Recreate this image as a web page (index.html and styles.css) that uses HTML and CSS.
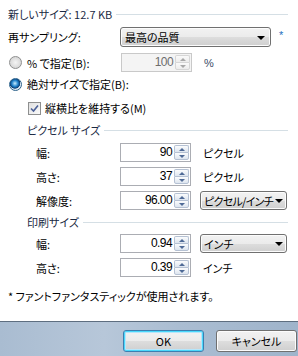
FILE: index.html
```html
<!DOCTYPE html>
<html lang="ja">
<head>
<meta charset="utf-8">
<link rel="stylesheet" href="styles.css">
</head>
<body>
<div class="dialog">
  <div class="content">
    <div class="group-head r-head1"><span class="gtext">新しいサイズ: 12.7 KB</span><span class="rule"></span></div>
    <div class="row r-resample">
      <span class="label l0">再サンプリング:</span>
      <div class="combo wide"><span class="ctext">最高の品質</span><span class="arrow"></span></div>
      <span class="star">*</span>
    </div>
    <div class="row r-percent">
      <span class="radio"></span>
      <span class="label l1">% で指定(B):</span>
      <div class="spin disabled"><span class="val">100</span><span class="btns"><span class="up"></span><span class="down"></span></span></div>
      <span class="unit pct">%</span>
    </div>
    <div class="row r-abs">
      <span class="radio checked"></span>
      <span class="label">絶対サイズで指定(B):</span>
    </div>
    <div class="row r-check">
      <span class="check"><svg width="9" height="9" viewBox="0 0 9 9"><path d="M1 4.5 L3.5 7 L8 1.5" fill="none" stroke="#4a5f97" stroke-width="1.6"/></svg></span>
      <span class="label">縦横比を維持する(M)</span>
    </div>
    <div class="group-head r-head2"><span class="gtext">ピクセル サイズ</span><span class="rule"></span></div>
    <div class="row r-field">
      <span class="label l2">幅:</span>
      <div class="spin"><span class="val">90</span><span class="btns"><span class="up"></span><span class="down"></span></span></div>
      <span class="unit">ピクセル</span>
    </div>
    <div class="row r-field">
      <span class="label l2">高さ:</span>
      <div class="spin"><span class="val">37</span><span class="btns"><span class="up"></span><span class="down"></span></span></div>
      <span class="unit">ピクセル</span>
    </div>
    <div class="row r-field">
      <span class="label l2">解像度:</span>
      <div class="spin"><span class="val">96.00</span><span class="btns"><span class="up"></span><span class="down"></span></span></div>
      <div class="combo small"><span class="ctext tight">ピクセル/インチ</span><span class="arrow"></span></div>
    </div>
    <div class="group-head r-head3"><span class="gtext">印刷サイズ</span><span class="rule"></span></div>
    <div class="row r-field first2">
      <span class="label l2">幅:</span>
      <div class="spin"><span class="val">0.94</span><span class="btns"><span class="up"></span><span class="down"></span></span></div>
      <div class="combo small"><span class="ctext">インチ</span><span class="arrow"></span></div>
    </div>
    <div class="row r-field">
      <span class="label l2">高さ:</span>
      <div class="spin"><span class="val">0.39</span><span class="btns"><span class="up"></span><span class="down"></span></span></div>
      <span class="unit">インチ</span>
    </div>
    <div class="note">* ファントファンタスティックが使用されます。</div>
  </div>
  <div class="footer">
    <button class="btn default">OK</button>
    <button class="btn">キャンセル</button>
  </div>
</div>
</body>
</html>
```
FILE: styles.css
```css
html, body {
  margin: 0;
  padding: 0;
  background: #fff;
}
body {
  font-family: "Noto Sans CJK JP", "Liberation Sans", sans-serif;
  font-size: 11px;
  font-feature-settings: "palt" 1;
  color: #000;
}
.dialog {
  width: 298px;
  height: 356px;
  display: flex;
  flex-direction: column;
  overflow: hidden;
}
.content {
  padding-left: 8px;
  display: flex;
  flex-direction: column;
}
.row {
  display: flex;
  align-items: center;
  height: 19px;
}
.group-head {
  display: flex;
  align-items: center;
  height: 16px;
  color: #1b2a44;
}
.gtext { white-space: nowrap; }
.rule {
  flex: 1;
  height: 1px;
  background: #d5dfe5;
  margin-left: 4px;
  margin-right: 10px;
}
.r-head1 { margin-top: 6px; }
.r-resample { margin-top: 5px; height: 20px; }
.r-percent { margin-top: 6px; }
.r-abs { margin-top: 3px; height: 18px; }
.r-check { margin-top: 6px; height: 18px; padding-left: 20px; }
.r-head2 { margin-top: 5px; padding-left: 19px; }
.r-field { margin-top: 5px; }
.r-head3 { margin-top: 4px; padding-left: 19px; }
.r-field.first2 { margin-top: 4px; }
.label { white-space: nowrap; box-sizing: border-box; }
.l0 { flex: 0 0 112px; }
.l1 { flex: 0 0 94px; }
.l2 { flex: 0 0 112px; padding-left: 28px; }
.radio {
  flex: 0 0 auto;
  width: 11px;
  height: 11px;
  border-radius: 50%;
  border: 1px solid #8e8f8f;
  background: radial-gradient(circle at 50% 50%, #f4f4f4 0, #d8d8d8 70%, #c8c8c8 100%);
  margin-left: 1px;
  margin-right: 5px;
}
.radio.checked {
  border-color: #2c628b;
  background: radial-gradient(circle at 45% 40%, #c9ecff 0, #1d7fc9 35%, #0d3d73 55%, #dfe9f3 62%, #e6eef7 100%);
}
.check {
  flex: 0 0 auto;
  width: 11px;
  height: 11px;
  border: 1px solid #8e8f8f;
  background: linear-gradient(135deg, #e0e0e0, #fafafa);
  display: flex;
  align-items: center;
  justify-content: center;
  margin-right: 4px;
}
.check svg { display: block; }
.combo {
  flex: 0 0 auto;
  display: flex;
  align-items: center;
  box-sizing: border-box;
  border: 1px solid #707070;
  border-radius: 3px;
  background: linear-gradient(to bottom, #f2f2f2 0, #ebebeb 50%, #dddddd 51%, #cfcfcf 100%);
  box-shadow: inset 0 0 0 1px #fcfcfc;
  padding-left: 4px;
  padding-right: 5px;
}
.combo.wide { width: 151px; height: 20px; }
.combo.small { width: 87px; height: 19px; margin-left: 9px; padding-left: 3px; padding-right: 3px; }
.ctext { flex: 1; white-space: nowrap; overflow: hidden; }
.ctext.tight { letter-spacing: -0.7px; overflow: visible; }
.arrow {
  flex: 0 0 auto;
  width: 0;
  height: 0;
  border-left: 4px solid transparent;
  border-right: 4px solid transparent;
  border-top: 4px solid #000;
  margin-top: 1px;
}
.star {
  color: #1e6fc0;
  margin-left: 8px;
  margin-top: -4px;
  font-family: "Liberation Sans", sans-serif;
  font-size: 11px;
}
.spin {
  flex: 0 0 71px;
  height: 19px;
  box-sizing: border-box;
  border: 1px solid #abadb3;
  background: #fff;
  display: flex;
  align-items: stretch;
}
.spin.disabled { border-color: #c9c9c9; background: #f4f4f4; }
.spin.disabled .val { color: #6d6d6d; }
.val {
  flex: 1;
  text-align: right;
  padding-right: 2px;
  font-family: "Liberation Sans", sans-serif;
  font-size: 12px;
  letter-spacing: -0.6px;
  line-height: 17px;
}
.btns {
  width: 15px;
  display: flex;
  flex-direction: column;
  margin: 1px 1px 1px 0;
}
.btns span {
  flex: 1;
  display: flex;
  align-items: center;
  justify-content: center;
  border: 1px solid #b5c1d3;
  background: linear-gradient(to bottom, #fbfcfd, #dde5ef);
}
.btns .up { border-bottom-width: 0; border-radius: 2px 2px 0 0; }
.btns .down { border-radius: 0 0 2px 2px; }
.btns .up::after, .btns .down::after {
  content: "";
  width: 0;
  height: 0;
  border-left: 3px solid transparent;
  border-right: 3px solid transparent;
}
.btns .up::after { border-bottom: 3px solid #4f6a96; }
.btns .down::after { border-top: 3px solid #4f6a96; }
.spin.disabled .btns span { border-color: #d6d6d6; background: linear-gradient(to bottom, #fafafa, #ececec); }
.spin.disabled .btns .up::after { border-bottom-color: #a8a8a8; }
.spin.disabled .btns .down::after { border-top-color: #a8a8a8; }
.unit { margin-left: 12px; white-space: nowrap; }
.unit.pct { color: #3b4a66; font-family: "Liberation Sans", sans-serif; }
.note {
  margin-top: 11px;
  height: 16px;
  line-height: 16px;
  white-space: nowrap;
}
.footer {
  margin-top: auto;
  height: 35px;
  box-sizing: border-box;
  border-top: 1px solid #5e6e80;
  background: linear-gradient(to right, #a9bcd1 0, #b7c7d9 35%, #aabdd2 60%, #9fb4cb 100%);
  display: flex;
  justify-content: flex-end;
  align-items: flex-start;
  padding-top: 8px;
  padding-right: 1px;
  gap: 12px;
}
.btn {
  width: 81px;
  height: 22px;
  box-sizing: border-box;
  border: 1px solid #707070;
  border-radius: 3px;
  background: linear-gradient(to bottom, #f2f2f2 0, #ebebeb 50%, #dddddd 51%, #cfcfcf 100%);
  box-shadow: inset 0 0 0 1px #fcfcfc;
  font-family: "Noto Sans CJK JP", "Liberation Sans", sans-serif;
  font-feature-settings: "palt" 1;
  font-size: 11px;
  color: #000;
  padding: 0;
}
.btn.default {
  border-color: #3c7fb1;
  box-shadow: inset 0 0 0 1px #48d8fb, inset 0 0 0 2px #b6e6fb;
}
```
